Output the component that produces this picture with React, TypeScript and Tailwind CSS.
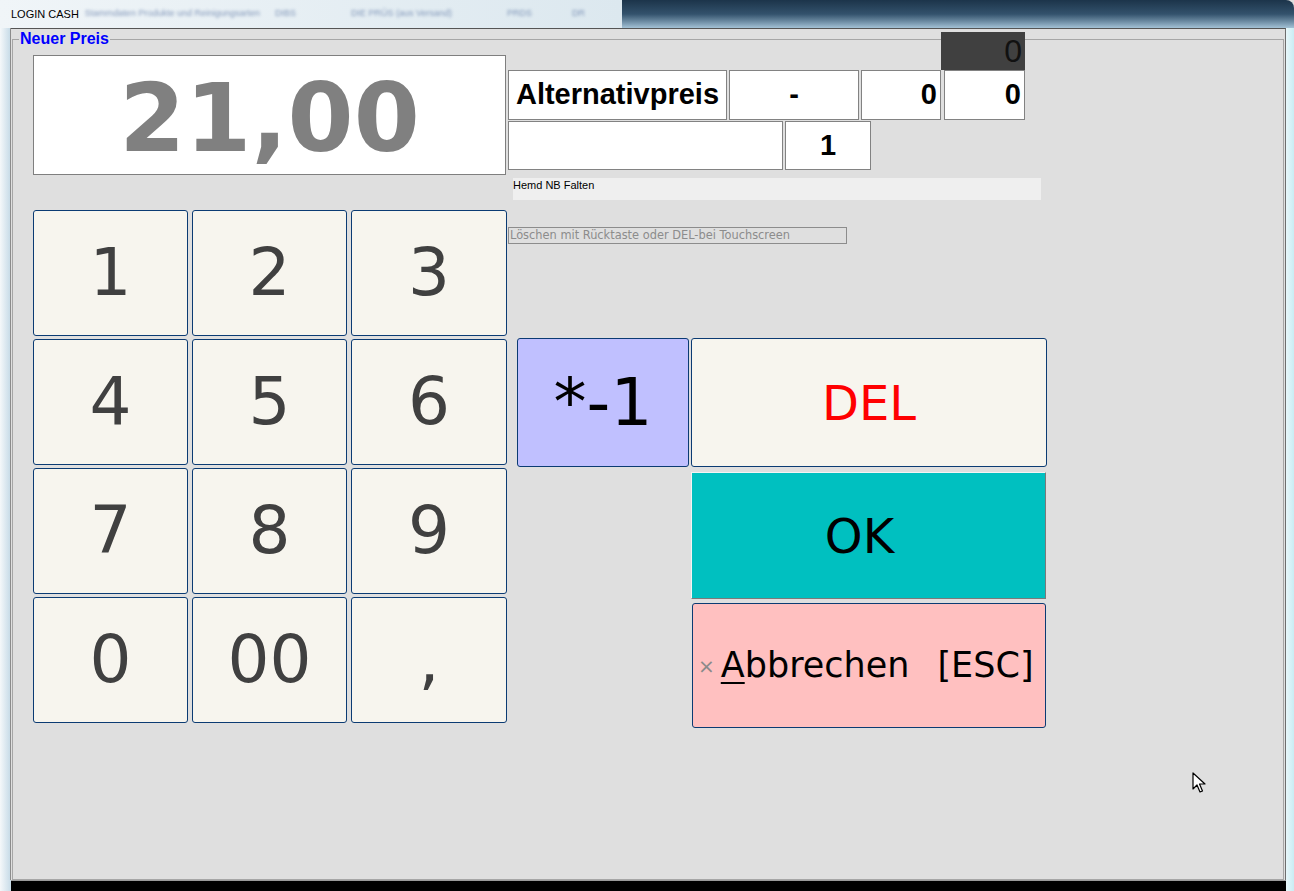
const sans = "font-['Liberation_Sans',Arial,sans-serif]"
const dv = "font-['DejaVu_Sans',Verdana,sans-serif]"

const keys = ['1', '2', '3', '4', '5', '6', '7', '8', '9', '0', '00', ',']

const Cell = ({ w, children, right }: { w: string; children?: React.ReactNode; right?: boolean }) => (
  <div
    className={`${w} h-full bg-white border border-[#828282] flex items-center ${
      right ? 'justify-end pr-[3px]' : 'justify-center'
    } text-[29px] font-bold text-black ${sans}`}
  >
    {children}
  </div>
)

export default function App() {
  const blurText = `shrink-0 whitespace-nowrap text-[9px] text-[#3c5a90] blur-[1.5px] opacity-60 ${sans}`
  return (
    <div className="relative w-[1294px] h-[891px] flex flex-col overflow-hidden bg-[#dfdfdf]">
      {/* window title bar */}
      <div className="h-[28px] flex">
        <div className="w-[622px] overflow-hidden bg-gradient-to-r from-[#f0f5f8] to-[#dce8ef] flex items-center pl-[11px]">
          <span className={`shrink-0 whitespace-nowrap text-[11px] text-black ${sans}`}>LOGIN CASH</span>
          <span className={`ml-[6px] ${blurText}`}>Stammdaten Produkte und Reinigungsarten</span>
          <span className={`ml-[15px] ${blurText}`}>DIBS</span>
          <span className={`ml-[55px] ${blurText}`}>DIE PRÜS (aus Versand)</span>
          <span className={`ml-[55px] ${blurText}`}>PRDS</span>
          <span className={`ml-[40px] ${blurText}`}>DR</span>
        </div>
        <div className="flex-1 rounded-tr-[8px] bg-gradient-to-b from-[#1c344a] via-[#33526c] to-[#a3c2d6]" />
      </div>

      {/* body */}
      <div className="h-[852px] flex">
        <div className="w-[11px] bg-gradient-to-r from-[#f5f8fa] to-[#c8dce8] border-r border-[#8c8c8c]" />
        <div className="w-[1275px] bg-[#dfdfdf] border-t border-t-[#555] border-r border-r-[#6e6e6e] pt-[2px]">
          <fieldset className="ml-[1px] w-[1272px] h-[849px] border border-[#a6a6a6]">
            <legend className={`ml-[6px] px-[1px] text-[16px] leading-[16px] font-bold text-[#0000ff] ${sans}`}>
              Neuer Preis
            </legend>

            <div className="pl-[20px] pt-[8px] flex items-start gap-[2px]">
              {/* left column: price + keypad */}
              <div className="w-[473px] flex flex-col">
                <div
                  className={`h-[120px] bg-white border border-[#7f7f7f] flex items-center justify-center pt-[6px] text-[95px] leading-none font-bold text-[#808080] ${dv}`}
                >
                  21,00
                </div>
                <div className="mt-[35px] grid grid-cols-[155px_155px_156px] auto-rows-[126px] gap-x-[4px] gap-y-[3px]">
                  {keys.map((k) => (
                    <button
                      key={k}
                      className={`border border-[#0b3b73] rounded-[3px] bg-[#f7f5ee] text-[#404040] text-[66px] leading-none flex items-center justify-center ${dv}`}
                    >
                      {k}
                    </button>
                  ))}
                </div>
              </div>

              {/* right column */}
              <div className="w-[540px] flex flex-col">
                <div
                  className={`-mt-[23px] ml-[433px] w-[84px] h-[38px] bg-[#404040] text-right pr-[3px] text-[32px] leading-[38px] text-[#111] ${sans}`}
                >
                  0
                </div>
                <div className="h-[50px] flex gap-[2px]">
                  <Cell w="w-[219px]">Alternativpreis</Cell>
                  <Cell w="w-[130px]">-</Cell>
                  <Cell w="w-[80px]" right>
                    0
                  </Cell>
                  <div className="ml-[1px] h-full">
                    <Cell w="w-[81px]" right>
                      0
                    </Cell>
                  </div>
                </div>
                <div className="mt-[1px] h-[49px] flex gap-[2px]">
                  <Cell w="w-[275px]" />
                  <Cell w="w-[86px]">1</Cell>
                </div>
                <div className={`mt-[8px] ml-[5px] w-[528px] h-[22px] bg-[#efefef] pt-[1px] text-[11px] leading-[13px] text-black ${sans}`}>
                  Hemd NB Falten
                </div>
                <div
                  className={`mt-[27px] w-[339px] h-[17px] border border-[#8c8c8c] pl-[1px] text-[11.4px] leading-[15px] text-[#8c8c8c] whitespace-nowrap ${dv}`}
                >
                  Löschen mit Rücktaste oder DEL-bei Touchscreen
                </div>

                <div className="mt-[94px] ml-[9px] flex gap-[2px]">
                  <button
                    className={`w-[172px] h-[129px] border border-[#0b3b73] rounded-[3px] bg-[#c0c0ff] text-black text-[66px] leading-none flex items-center justify-center ${dv}`}
                  >
                    *-1
                  </button>
                  <button
                    className={`w-[356px] h-[129px] border border-[#0b3b73] rounded-[3px] bg-[#f7f5ee] text-[#ff0000] text-[48px] leading-none flex items-center justify-center ${dv}`}
                  >
                    DEL
                  </button>
                </div>
                <button
                  className={`mt-[5px] ml-[183px] w-[355px] h-[127px] bg-[#00c0c0] border border-t-[#f4f4f4] border-l-[#f4f4f4] border-r-[#7a7a7a] border-b-[#7a7a7a] pr-[18px] text-black text-[48px] leading-none flex items-center justify-center ${dv}`}
                >
                  OK
                </button>
                <button
                  className={`mt-[4px] ml-[184px] w-[354px] h-[125px] border border-[#0b3b73] rounded-[3px] bg-[#ffc0c0] text-black text-[35px] leading-none flex items-center pl-[5px] whitespace-nowrap ${dv}`}
                >
                  <span className="text-[20px] text-[#8a8a8a] mr-[6px]">×</span>
                  <span>
                    <span className="underline underline-offset-[5px] decoration-[2px]">A</span>bbrechen
                  </span>
                  <span className="ml-[28px]">[ESC]</span>
                </button>
              </div>
            </div>
          </fieldset>
        </div>
        <div className="w-[8px] bg-gradient-to-r from-[#e8f7fa] to-[#c9edf4]" />
      </div>

      {/* bottom edge */}
      <div className="h-[11px] flex">
        <div className="w-[11px] bg-gradient-to-r from-[#f5f8fa] to-[#c8dce8]" />
        <div className="w-[1275px] bg-black border-t border-[#9a9a9a]" />
        <div className="w-[8px] bg-gradient-to-r from-[#e8f7fa] to-[#c9edf4]" />
      </div>

      {/* mouse pointer */}
      <svg className="absolute left-[1192px] top-[772px]" width="14" height="22" viewBox="0 0 14 22">
        <path d="M1 1 L1 17 L5 13 L8 20 L10.5 19 L7.5 12 L13 12 Z" fill="white" stroke="black" strokeWidth="1.2" strokeLinejoin="round" />
      </svg>
    </div>
  )
}
